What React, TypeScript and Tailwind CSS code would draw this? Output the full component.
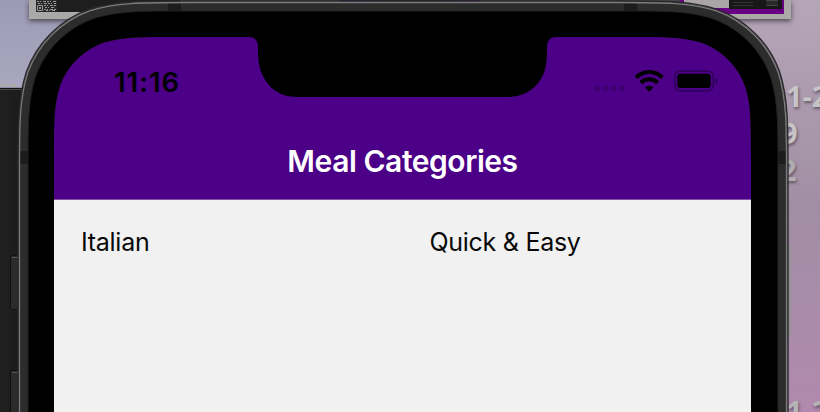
import React from "react";

// Rounded rectangle with continuous-curvature top corners, open past the bottom of the view.
function shell(left: number, right: number, top: number, r: number) {
  const b = 430;
  const L = (x: number, y: number) => `${left + x * r},${top + y * r}`;
  const R = (x: number, y: number) => `${right - x * r},${top + y * r}`;
  return [
    `M${left},${b}`,
    `L${L(0, 1.5287)}`,
    `C${L(0, 1.0885)} ${L(0, 0.8684)} ${L(0.0749, 0.6315)}`,
    `C${L(0.1691, 0.3728)} ${L(0.3728, 0.1691)} ${L(0.6315, 0.0749)}`,
    `C${L(0.8684, 0)} ${L(1.0885, 0)} ${L(1.5287, 0)}`,
    `L${R(1.5287, 0)}`,
    `C${R(1.0885, 0)} ${R(0.8684, 0)} ${R(0.6315, 0.0749)}`,
    `C${R(0.3728, 0.1691)} ${R(0.1691, 0.3728)} ${R(0.0749, 0.6315)}`,
    `C${R(0, 0.8684)} ${R(0, 1.0885)} ${R(0, 1.5287)}`,
    `L${right},${b}Z`,
  ].join(" ");
}

const outer = shell(18.5, 787.5, 1.5, 112);
const inner = shell(28, 778, 11, 103);
const screen = shell(54, 751, 37, 78);

function Desktop() {
  return (
    <>
      <div className="absolute left-0 top-0 h-[90px] w-[110px] bg-linear-to-b from-[#9c9ab5] to-[#aaa8c0]" />
      <div className="absolute left-[29px] top-0 h-[19px] w-[762px] bg-[#aaa9a7] shadow-[0_2px_5px_#4a4451]" />
      <div className="absolute left-[57px] top-0 h-[12px] w-[600px] bg-[#1e1e1e]" />
      <div className="absolute left-[180px] top-0 h-[3px] w-[500px] bg-[#46444b]" />
      <div className="absolute left-[340px] top-0 h-[3px] w-[140px] bg-linear-to-r from-[#1c0540] via-[#111] to-[#3c0549]" />
      <svg className="absolute left-[36px] top-0" width="21" height="12" viewBox="0 0 21 12">
        <path fill="#292929" d="M0 0h21v12H0z" />
        <path stroke="#999" strokeWidth="1" strokeDasharray="2 1 1 2 3 1" d="M1 1.5h19M2 3.5h18M8 5.5h12M9 7.5h10M8 9.5h12M10 10.5h9" />
        <path fill="none" stroke="#999" d="M1.5 5.5h5v5h-5z" />
        <path fill="#999" d="M3 7h2v2H3z" />
      </svg>
      <div className="absolute left-[680px] top-0 h-[14px] w-[104px] bg-[#690083]" />
      <div className="absolute left-[684px] top-0 h-[8px] w-[45px] bg-[#aaa6a8]" />
      <div className="absolute left-[729px] top-0 flex h-[9px] w-[53px] justify-between bg-[#171717] px-1">
        <div className="mt-0.5 h-1 w-5 border-y border-[#343434]" />
        <div className="h-[6px] w-3 border-y border-[#444] bg-[#292929]" />
      </div>
      <div className="absolute left-0 top-[84px] h-[8px] w-[16px] border-r-2 border-t-2 border-[#aaa]" />
      <div className="absolute left-0 top-[89px] h-[323px] w-[40px] border-t border-[#4b4b4b] bg-linear-to-r from-[#202020] to-[#171717] shadow-[0_-1px_1px_#111]" />
      <div className="absolute left-[782px] top-[79px] flex flex-col font-['Noto_Sans'] text-[29px] font-bold leading-[34px] text-[#c6c4c6] [text-shadow:1px_2px_3px_#67576a]">
        <span className="ml-[4px] h-[37px] whitespace-nowrap">1-2</span>
        <span className="-ml-px h-[37px]">9</span>
        <span className="-ml-[2px] h-[34px] text-[#b0aeb0]">2</span>
      </div>
      <div className="absolute left-[786px] top-[394px] whitespace-nowrap font-['Noto_Sans'] text-[29px] font-bold leading-[34px] text-[#b5b3b5] [text-shadow:1px_2px_3px_#67576a]">
        1-2
      </div>
      <div className="absolute left-[780px] top-[245px] h-[92px] w-[11px] border-r-[3px] border-[#969396] bg-[#84777f]" />
    </>
  );
}

function Bezel() {
  return (
    <svg className="absolute inset-0" width="820" height="412" viewBox="0 0 820 412">
      <g fill="#2b2b2b" stroke="#111" strokeWidth="1">
        <rect x="10.5" y="255.5" width="12" height="54" rx="2" />
        <rect x="10.5" y="370.5" width="12" height="54" rx="2" />
      </g>
      <path stroke="#555" d="M12 257.5h7M12 372.5h7" />
      <path d={outer + screen} fillRule="evenodd" fill="#2c2c2c" />
      <path d="M168 3h13v8h-13zM624 3h13v8h-13zM20 151h8v13h-8zM778 151h9v13h-9z" fill="#1c1c1c" />
      <path d={inner + screen} fillRule="evenodd" fill="#000" />
      <path d={inner} fill="none" stroke="#202020" strokeWidth="1" />
      <path d={shell(18, 788, 1, 112)} fill="none" stroke="#29282b" strokeWidth="1.4" />
      <path d={shell(19.5, 786.5, 2.5, 111)} fill="none" stroke="#7c7c7c" strokeWidth="1.3" />
      <path d="M245 36V37h4C255 37 258 41 258 47C258 58 258.500 66 262 74C268 88 280 97 297 97H507C525 97 537 88 543 75C546.500 67 547 59 547 47C547 41 550 37 556 37h4V36Z" fill="#000" />
    </svg>
  );
}

function StatusBar() {
  return (
    <div className="flex h-[88px] items-center pl-[60px] pr-[33px]">
      <span className="pt-px text-[27.5px] font-semibold leading-[36px] tracking-[0.95px] text-black">11:16</span>
      <svg className="ml-auto" width="126" height="26" viewBox="592 68 126 26">
        <g fill="#3e0070">
          <circle cx="597" cy="88.500" r="2.800" />
          <circle cx="605.500" cy="88.500" r="2.800" />
          <circle cx="613.500" cy="88.500" r="2.800" />
          <circle cx="622" cy="88.500" r="2.800" />
        </g>
        <g fill="none" stroke="#000" strokeWidth="4.200">
          <path d="M636.200 77.400A18.500 18.500 0 0 1 662.300 77.400" />
          <path d="M640.900 82.700A11.800 11.800 0 0 1 657.600 82.700" />
        </g>
        <path d="M649.200 91.700L645 87.500A6.200 6.200 0 0 1 653.400 87.500Z" />
        <rect x="674.700" y="71.200" width="38.600" height="19.600" rx="5.500" fill="none" stroke="#2e0057" strokeWidth="1.500" />
        <rect x="677.300" y="73.800" width="33.400" height="14.200" rx="3" />
        <path d="M715.500 78V84C718.500 83 718.500 79 715.500 78Z" fill="#2e0057" />
      </svg>
    </div>
  );
}

export default function App() {
  return (
    <div className="relative h-[412px] w-[820px] overflow-hidden bg-linear-to-b from-[#b5a6b7] via-[#a18ea4] to-[#b189ae] font-['Inter',sans-serif]">
      <Desktop />
      <div className="relative flex h-full pl-[54px] pr-[69px] pt-[37px]">
        <main className="flex flex-1 flex-col overflow-hidden rounded-t-[60px] bg-linear-to-b from-[#4b0087] from-50% to-[#f1f1f1] to-50%">
          <header className="flex h-[163px] flex-col border-b border-[#8050a5] bg-[#4b0087]">
            <StatusBar />
            <h1 className="whitespace-nowrap pt-[17px] text-center text-[30px] font-semibold leading-[38px] tracking-[-0.45px] text-white">
              Meal Categories
            </h1>
          </header>
          <div className="grid flex-1 auto-rows-min grid-cols-2 bg-[#f1f1f1] pt-[26px] text-[25px] leading-[32px] tracking-[-0.28px] text-[#090909]">
            <span className="pl-[27px]">Italian</span>
            <span className="pl-[27px]">Quick &amp; Easy</span>
          </div>
        </main>
      </div>
      <Bezel />
    </div>
  );
}
